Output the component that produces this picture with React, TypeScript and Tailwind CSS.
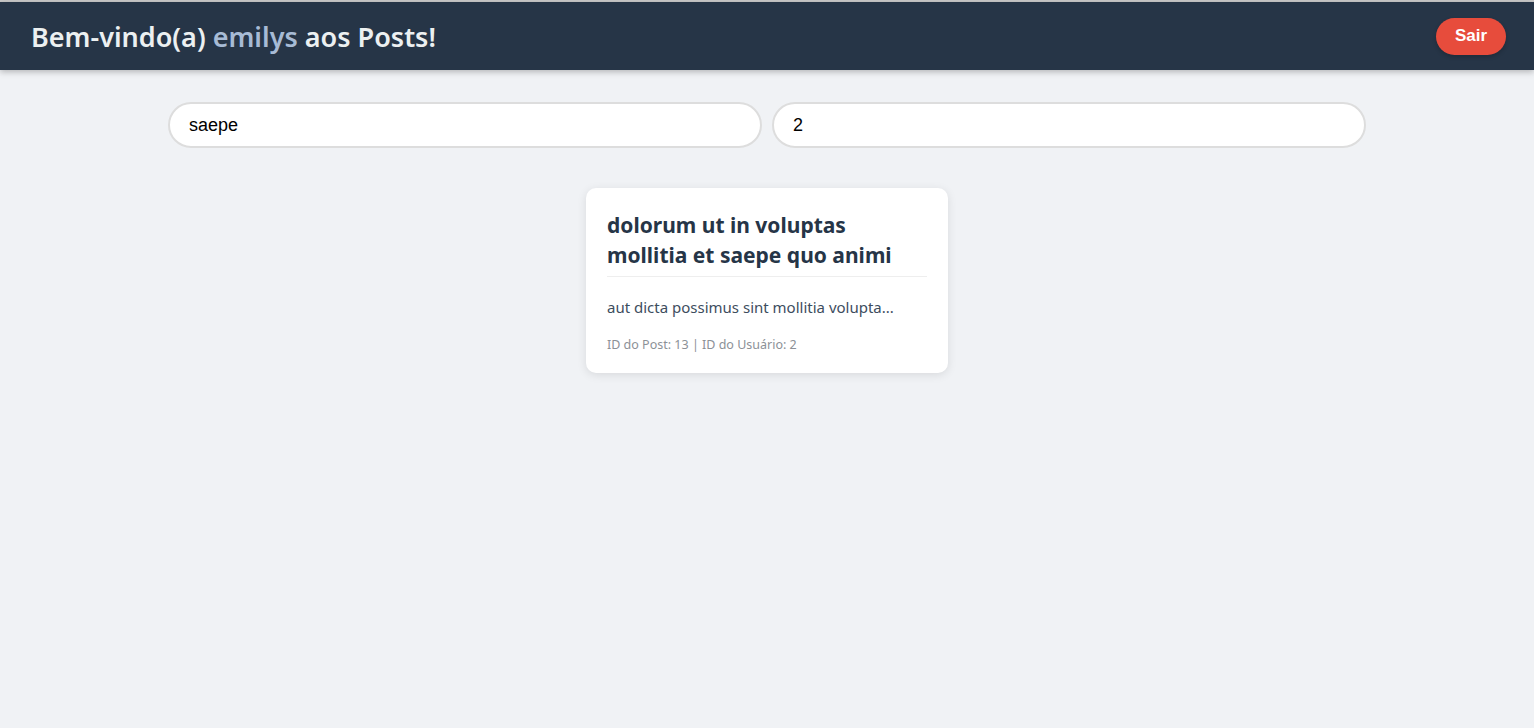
export default function App() {
  return (
    <div className="min-h-screen bg-[#f0f2f5] border-t-2 border-[#c9c9c9] font-['Noto_Sans',sans-serif]">
      {/* Header */}
      <header className="h-[68px] bg-[#263547] flex items-center justify-between pl-[31px] pr-[28px] shadow-[0_2px_6px_rgba(0,0,0,0.25)]">
        <h1 className="text-[27px] font-semibold text-[#ecf0f1] leading-none">
          Bem-vindo(a) <span className="text-[#a7bbd5]">emilys</span> aos Posts!
        </h1>
        <button className="h-[37px] w-[70px] rounded-full bg-[#e74c3c] text-white text-[17px] font-bold font-['Liberation_Sans',sans-serif] shadow-[0_2px_4px_rgba(0,0,0,0.2)]">
          Sair
        </button>
      </header>

      {/* Filtros */}
      <div className="max-w-[1200px] mx-auto mt-[32px] flex gap-[10px] px-px">
        <input
          defaultValue="saepe"
          className="flex-1 h-[46px] rounded-full border-2 border-[#dddddd] bg-white px-[19px] text-[18px] text-black font-['Liberation_Sans',sans-serif] outline-none"
        />
        <input
          defaultValue="2"
          className="flex-1 h-[46px] rounded-full border-2 border-[#dddddd] bg-white px-[19px] text-[18px] text-black font-['Liberation_Sans',sans-serif] outline-none"
        />
      </div>

      {/* Posts */}
      <div className="flex justify-center mt-[40px]">
        <div className="w-[362px] bg-white rounded-[10px] shadow-[0_2px_10px_rgba(0,0,0,0.1)] px-[21px] pt-[22px] pb-[18px]">
          <h2 className="text-[21px] font-bold text-[#263547] leading-[30px] pb-[6px] border-b border-[#eeeeee]">
            dolorum ut in voluptas mollitia et saepe quo animi
          </h2>
          <p className="mt-[18px] text-[15px] text-[#3d4d5e] leading-[24px]">
            aut dicta possimus sint mollitia volupta...
          </p>
          <p className="mt-[16px] text-[12.5px] text-[#8c9197] leading-[20px]">
            ID do Post: 13 | ID do Usuário: 2
          </p>
        </div>
      </div>
    </div>
  );
}
